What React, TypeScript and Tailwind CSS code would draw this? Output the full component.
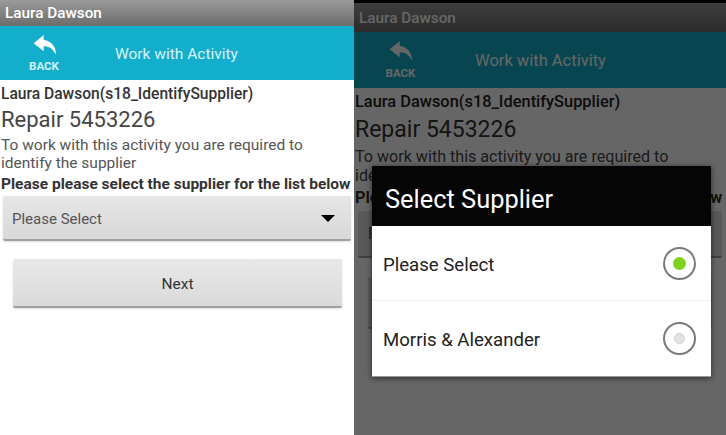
// back arrow drawn from the reference
function BackIcon({ className }: { className: string }) {
  return (
    <svg viewBox="0 0 26 22" className={className} fill="currentColor">
      <path d="M11 0 L0 9 L11 18 L11 12.5 C17 12.5 21 15 24.5 21.5 C25 14 20 6.5 11 5.5 Z" />
    </svg>
  );
}

function Radio({ on }: { on: boolean }) {
  return (
    <div className="w-[33px] h-[33px] rounded-full border-2 border-[#7a7a7a] flex items-center justify-center">
      {on ? (
        <div className="w-[13px] h-[13px] rounded-full bg-[#7ed321] mb-[1px]" />
      ) : (
        <div className="w-[11px] h-[11px] rounded-full bg-[#e2e2e2] border border-[#d0d0d0] mb-[1px]" />
      )}
    </div>
  );
}

function LeftScreen() {
  return (
    <div className="w-[354px] h-[435px] shrink-0 bg-white flex flex-col overflow-hidden">
      <div className="h-[26px] shrink-0 bg-gradient-to-b from-[#9a9a9a] to-[#6c6c6c] flex items-center pl-[5px] pt-[1px] text-[15.3px] font-medium text-white">
        Laura Dawson
      </div>
      <div className="h-[54px] shrink-0 bg-[#12aecb] flex text-white">
        <div className="w-[88px] flex flex-col items-center pt-[9px]">
          <BackIcon className="w-[25px] h-[20px] ml-[2px]" />
          <span className="text-[11.5px] font-bold leading-[14px] mt-[4px] text-[#d4f1f6]">BACK</span>
        </div>
        <div className="flex-1 pt-[18px] pl-[27px] text-[15.5px] leading-[20px] text-[#d9f3f8]">Work with Activity</div>
      </div>
      <div className="pt-[5px] pl-[1px] text-[15.6px] font-medium leading-[18px] text-[#333]">
        Laura Dawson(s18_IdentifySupplier)
      </div>
      <div className="pl-[1px] mt-[2px] text-[22px] leading-[30px] text-[#444]">Repair 5453226</div>
      <div className="pl-[1px] mt-[1px] text-[15.5px] leading-[18px] text-[#555]">
        To work with this activity you are required to
        <br />
        identify the supplier
      </div>
      <div className="pl-[1px] mt-[3px] text-[15.5px] font-bold leading-[19px] text-[#333] whitespace-nowrap">
        Please please select the supplier for the list below
      </div>
      <div className="mx-[3px] mt-[2px] h-[45px] rounded-[2px] bg-gradient-to-b from-[#e6e6e6] to-[#d8d8d8] border-b-2 border-[#a0a0a0] shadow-sm flex items-center justify-between pl-[9px] pr-[16px] text-[15px] text-[#555]">
        <span className="pt-[4px]">Please Select</span>
        <div className="w-0 h-0 border-l-[7px] border-r-[7px] border-t-[7px] border-l-transparent border-r-transparent border-t-black mt-[1px]" />
      </div>
      <div className="ml-[13px] mr-[12px] mt-[18px] h-[49px] rounded-[2px] bg-gradient-to-b from-[#e8e8e8] to-[#dadada] border-b-2 border-[#a0a0a0] shadow-sm flex items-center justify-center pt-[4px] text-[15.5px] text-[#333]">
        Next
      </div>
    </div>
  );
}

function Row({ label, on }: { label: string; on: boolean }) {
  return (
    <div className="h-[75px] flex items-center justify-between pl-[11px] pr-[15px] text-[18.6px] text-[#222]">
      <span className="pt-[4px]">{label}</span>
      <Radio on={on} />
    </div>
  );
}

function RightScreen() {
  return (
    <div className="relative flex-1 h-[435px] bg-white flex flex-col overflow-hidden">
      <div className="h-[3px] shrink-0 bg-black" />
      <div className="h-[29px] shrink-0 bg-gradient-to-b from-[#9a9a9a] to-[#6c6c6c] flex items-center pl-[5px] pt-[2px] text-[15.3px] font-medium text-white">
        Laura Dawson
      </div>
      <div className="h-[56px] shrink-0 bg-[#12aecb] flex text-white">
        <div className="w-[93px] flex flex-col items-center pt-[9px]">
          <BackIcon className="w-[25px] h-[20px] ml-[2px]" />
          <span className="text-[11.5px] font-bold leading-[14px] mt-[5px]">BACK</span>
        </div>
        <div className="flex-1 pt-[19px] pl-[28px] text-[16.5px] leading-[20px]">Work with Activity</div>
      </div>
      <div className="pt-[5px] pl-[1px] text-[16.4px] font-medium leading-[18px] text-[#222]">
        Laura Dawson(s18_IdentifySupplier)
      </div>
      <div className="pl-[1px] mt-[4px] text-[23px] leading-[30px] text-[#333]">Repair 5453226</div>
      <div className="pl-[1px] mt-[2px] text-[16.1px] leading-[19px] text-[#444]">
        To work with this activity you are required to
        <br />
        identify the supplier
      </div>
      <div className="pl-[1px] mt-[3px] text-[16.3px] font-bold leading-[19px] text-[#333] whitespace-nowrap">
        Please please select the supplier for the list below
      </div>
      <div className="mx-[4px] mt-[4px] h-[47px] shrink-0 rounded-[2px] bg-[#dedede] border-b-2 border-[#a0a0a0] flex items-center pl-[10px] text-[16px] text-[#555]">
        Please Select
      </div>
      <div className="mx-[14px] mt-[19px] h-[52px] shrink-0 rounded-[2px] bg-[#e0e0e0] border-b-2 border-[#a0a0a0]" />

      {/* dim layer and dialog sit over the page */}
      <div className="absolute inset-x-0 top-[3px] bottom-0 bg-black/60" />
      <div className="absolute left-[18px] top-[166px] w-[339px] shadow-[0_1px_6px_rgba(0,0,0,0.6)]">
        <div className="h-[60px] bg-[#050505] flex items-center pl-[13px] pt-[6px] text-[25.4px] text-white">Select Supplier</div>
        <div className="bg-white border-b border-[#999]">
          <Row label="Please Select" on />
          <div className="h-px bg-[#f0f0f0] -mt-px" />
          <Row label="Morris & Alexander" on={false} />
        </div>
      </div>
    </div>
  );
}

export default function App() {
  return (
    <div className="w-[726px] h-[435px] flex overflow-hidden font-['Roboto',sans-serif]">
      <LeftScreen />
      <RightScreen />
    </div>
  );
}
